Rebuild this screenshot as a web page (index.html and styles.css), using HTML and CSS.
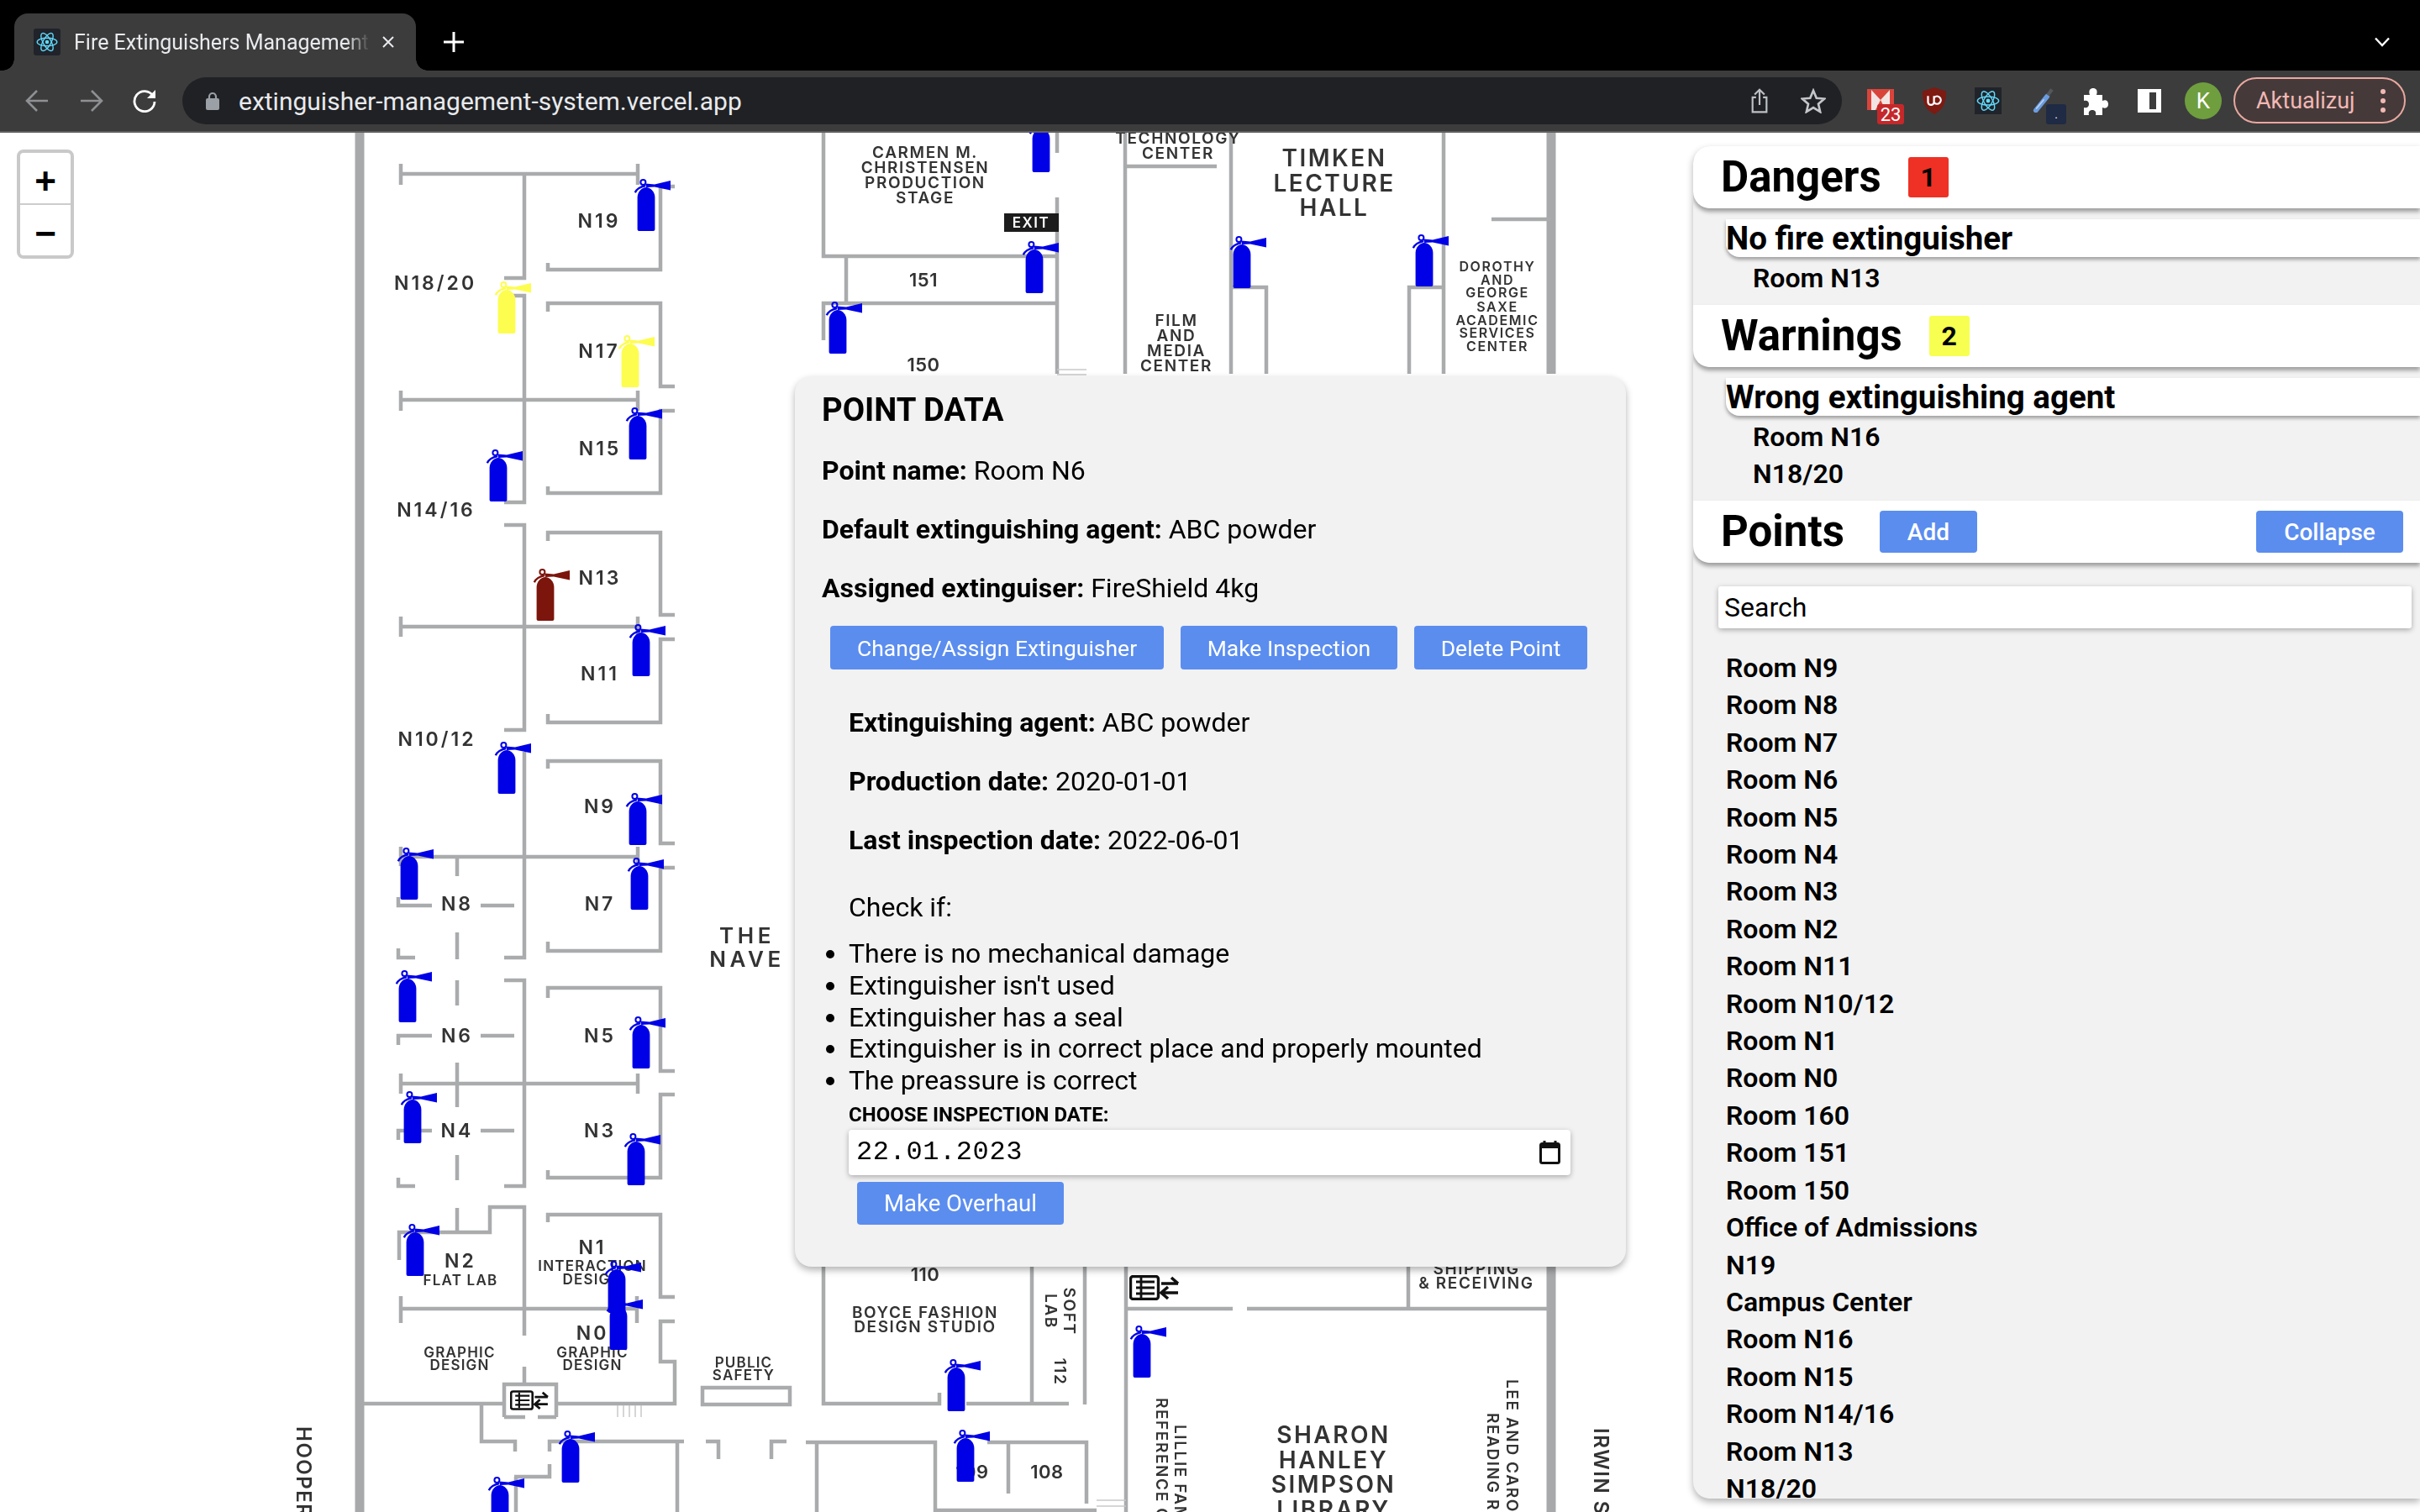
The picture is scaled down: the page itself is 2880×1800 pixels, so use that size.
FILE: index.html
```html
<!DOCTYPE html>
<html lang="en">
<head>
<meta charset="utf-8">
<title>Fire Extinguishers Management</title>
<link rel="stylesheet" href="styles.css">
</head>
<body>
<svg class="defs" width="0" height="0" aria-hidden="true">
  <defs>
    <symbol id="ext" viewBox="0 0 43 62" overflow="visible">
      <path d="M3.6 22C3.6 15 9 10 14 10C19 10 24.4 15 24.4 22V60C24.4 61.2 23.6 62 22.4 62H5.6C4.4 62 3.6 61.2 3.6 60Z"/>
      <circle cx="10.4" cy="3.9" r="3" fill="none" stroke="currentColor" stroke-width="2"/>
      <path d="M.8 16.2C3 11.4 7.5 9.4 13 8.2" fill="none" stroke="currentColor" stroke-width="2.4"/>
      <path d="M13 5.5L24 6.6L43 2V13.6L24 9.4L14 10Z"/>
    </symbol>
    <symbol id="atom" viewBox="0 0 32 32">
      <g fill="none" stroke="#61dafb" stroke-width="1.5">
        <ellipse cx="16" cy="16" rx="13.5" ry="5.4"/>
        <ellipse cx="16" cy="16" rx="13.5" ry="5.4" transform="rotate(60 16 16)"/>
        <ellipse cx="16" cy="16" rx="13.5" ry="5.4" transform="rotate(120 16 16)"/>
      </g>
      <circle cx="16" cy="16" r="2.6" fill="#61dafb"/>
    </symbol>
    <symbol id="lift" viewBox="0 0 62 30">
      <rect x="1.5" y="1.5" width="33" height="27" rx="3" fill="none" stroke="#111" stroke-width="3.4"/>
      <path d="M8 8H30M8 15H30M8 22H30M14 3V27" fill="none" stroke="#111" stroke-width="2.8"/>
      <path d="M38 10H58M50 3L58 10M38 21H58M46 14L38 21L46 28" fill="none" stroke="#111" stroke-width="3.6"/>
    </symbol>
  </defs>
</svg>

<div class="browser">
  <header class="tabstrip">
    <div class="tab">
      <span class="favicon"><svg width="28" height="28"><use href="#atom"/></svg></span>
      <span class="tab-title">Fire Extinguishers Management System</span>
      <svg class="tab-close" width="16" height="16" viewBox="0 0 16 16"><path d="M2 2L14 14M14 2L2 14" stroke="#e8eaed" stroke-width="2"/></svg>
    </div>
    <svg class="new-tab" width="26" height="26" viewBox="0 0 26 26"><path d="M13 1V25M1 13H25" stroke="#fff" stroke-width="3"/></svg>
    <svg class="tab-menu" width="20" height="12" viewBox="0 0 20 12"><path d="M2 1.5L10 10L18 1.5" fill="none" stroke="#fff" stroke-width="2.4"/></svg>
  </header>

  <nav class="toolbar">
    <svg class="nav-icon nav-back" width="28" height="28" viewBox="0 0 28 28"><path d="M27 14H3M14 2L2 14L14 26" fill="none" stroke="#8e9093" stroke-width="2.6"/></svg>
    <svg class="nav-icon nav-forward" width="28" height="28" viewBox="0 0 28 28"><path d="M1 14H25M14 2L26 14L14 26" fill="none" stroke="#8e9093" stroke-width="2.6"/></svg>
    <svg class="nav-icon nav-reload" width="28" height="28" viewBox="0 0 28 28"><path d="M24 8A12 12 0 1 0 26 15" fill="none" stroke="#fff" stroke-width="2.8"/><path d="M27 1V11H17Z" fill="#fff"/></svg>
    <div class="omnibox">
      <svg class="lock" width="16" height="22" viewBox="0 0 16 22"><path d="M4 9V6A4 4 0 0 1 12 6V9" fill="none" stroke="#9aa0a6" stroke-width="2.2"/><rect y="8" width="16" height="14" rx="2" fill="#9aa0a6"/></svg>
      <span class="url">extinguisher-management-system.vercel.app</span>
      <svg class="omni-share" width="22" height="30" viewBox="0 0 24 36"><path d="M7 13H2V34H22V13H17M12 24V2M5 9L12 2L19 9" fill="none" stroke="#bdc1c6" stroke-width="2.6"/></svg>
      <svg class="omni-star" width="30" height="30" viewBox="0 0 32 32"><path d="M16 3L20 12.5L30 13.4L22.4 20L24.7 30L16 24.7L7.3 30L9.6 20L2 13.4L12 12.5Z" fill="none" stroke="#c4c7ca" stroke-width="2.8"/></svg>
    </div>
    <div class="ext-row">
      <span class="ext ext-gmail">
        <svg width="32" height="25" viewBox="0 0 32 25"><rect width="32" height="25" fill="#d9443a"/><path d="M5 1L16 13L27 1V25H5Z" fill="#f2e4e2"/><path d="M16 13L10 25H22Z" fill="#d9443a"/></svg>
        <span class="ext-badge badge-red">23</span>
      </span>
      <span class="ext ext-ublock">
        <svg width="30" height="32" viewBox="0 0 30 34"><path d="M15 0L30 5C30 20 26 28 15 34C4 28 0 20 0 5Z" fill="#7d1a12"/><path d="M7 11V18.500A3.800 3.800 0 0 0 14.600 18.500V11M15 12.700A4.800 4.800 0 1 1 15 19.500" fill="none" stroke="#fff" stroke-width="2.400"/></svg>
      </span>
      <span class="ext ext-react"><svg width="30" height="30"><use href="#atom"/></svg></span>
      <span class="ext ext-pipette">
        <svg width="30" height="30" viewBox="0 0 30 36"><path d="M4 33L20 13" stroke="#6b9ce0" stroke-width="7" stroke-linecap="round"/><path d="M5 30L15 18" stroke="#b9d2f2" stroke-width="2" stroke-linecap="round"/><path d="M21 11L27 3" stroke="#54585c" stroke-width="5"/></svg>
        <span class="ext-badge badge-navy">.</span>
      </span>
      <svg class="ext ext-puzzle" width="30" height="32" viewBox="0 0 30 32"><path d="M1 8H8C6 2 9 0 12 0C15 0 18 2 16 8H23V15C28 13 30 16 30 19C30 22 28 25 23 23V32H15C16 28 14 26 11 26C8 26 6 28 7 32H1V23C5 24 7 22 7 19C7 16 5 14 1 15Z" fill="#fff"/></svg>
      <span class="ext ext-panel"></span>
      <span class="avatar">K</span>
      <span class="update">
        <span class="update-label">Aktualizuj</span>
        <span class="kebab"><i></i><i></i><i></i></span>
      </span>
    </div>
  </nav>

  <main class="page">
    <section class="map">
      <svg class="plan" width="2016" height="1642" viewBox="0 158 2016 1642">
        <g class="plan-art">
          <path class="wall-thick" d="M428 158V1800M1846 158V445M1846 1508V1800"/>
          <path class="wall" d="M477 195V220M477 207H759M759 195V220M624 207V331H600M600 352H624V598H600M652 313V321H786V222H803M652 371V361H786V460H803M477 465V489M477 476H759M759 465V489M803 489H786V587H652V579M600 625H624V869H600M652 644V634H786V732H803M477 734V758M477 746H759M759 734V758M803 761H786V860H652V850M624 895V1140H600M652 915V906H786V1004H803M477 1008V1031M477 1020H759M759 1008V1031M544 1020V1043M474 1068V1078H514M572 1078H612M544 1110V1142M474 1129V1140H494M803 1033H786V1132H652V1121M600 1167H624V1412H600M652 1188V1176H786V1275H803M544 1167V1197M474 1244V1233H514M572 1233H612M544 1265V1318M477 1278V1302M477 1290H759M759 1278V1302M803 1303H786V1402H652V1393M474 1357V1346H514M572 1346H612M544 1375V1405M474 1402V1412H494M475 1500V1467H583V1437H624V1590M544 1438V1467M652 1455V1446H786V1544H803M477 1543V1575M477 1558H760M758 1543V1575M803 1573H786V1621H803V1671H663M433 1671H600M600 1687V1648H662V1687M600 1687H625M640 1687H662M624 1627V1648M573 1671V1716H613V1728M654 1728V1716H814M806 1716V1800M654 1743V1758H612M614 1758V1800M840 1716H855V1737M936 1716H918V1737M959 1717H1113V1800M972 1717V1800"/>
          <path class="wall" d="M980 158V305H1258M1258 158V182M1258 235V445M1007 305V361M980 405V361H1258M1339 158V445M1339 198H1448M1465 158V445M1465 342H1507V445M1677 445V342H1718M1718 158V445M1775 261H1846M980 1508V1671H1118V1658M1150 1671H1272M1228 1508V1671M1291 1508V1672M1340 1508V1800M1340 1558H1467M1484 1558H1843M1676 1508V1558M1175 1717H1293V1790M1200 1717V1778M1113 1798H1305"/>
          <rect class="wall" x="836" y="1652" width="104" height="20"/>
          <path class="wall-faint" d="M1258 440H1293M1258 446H1293M1305 1786H1340M1305 1793H1340M735 1673V1687M742 1673V1687M749 1673V1687M756 1673V1687M763 1673V1687"/>
          <use href="#lift" x="607" y="1655" width="48" height="24"/>
          <use href="#lift" x="1344" y="1518" width="62" height="30"/>
          <rect class="exit-box" x="1195" y="254" width="65" height="22"/>
          <text class="exit-text" x="1227" y="265">EXIT</text>

          <text class="lb lb-room" x="713" y="263">N19</text>
          <text class="lb lb-room" x="518" y="337">N18/20</text>
          <text class="lb lb-room" x="713" y="418">N17</text>
          <text class="lb lb-room" x="714" y="534">N15</text>
          <text class="lb lb-room" x="519" y="607">N14/16</text>
          <text class="lb lb-room" x="714" y="688">N13</text>
          <text class="lb lb-room" x="714" y="802">N11</text>
          <text class="lb lb-room" x="520" y="880">N10/12</text>
          <text class="lb lb-room" x="714" y="960">N9</text>
          <text class="lb lb-room" x="544" y="1076">N8</text>
          <text class="lb lb-room" x="714" y="1076">N7</text>
          <text class="lb lb-room" x="544" y="1233">N6</text>
          <text class="lb lb-room" x="714" y="1233">N5</text>
          <text class="lb lb-room" x="544" y="1346">N4</text>
          <text class="lb lb-room" x="714" y="1346">N3</text>
          <text class="lb lb-room" x="548" y="1501">N2</text>
          <text class="lb lb-small" x="548" y="1524">FLAT LAB</text>
          <text class="lb lb-room" x="705" y="1485">N1</text>
          <text class="lb lb-small" x="705" y="1507">INTERACTION</text>
          <text class="lb lb-small" x="705" y="1523">DESIGN</text>
          <text class="lb lb-room" x="705" y="1587">N0</text>
          <text class="lb lb-small" x="547" y="1610">GRAPHIC</text>
          <text class="lb lb-small" x="547" y="1625">DESIGN</text>
          <text class="lb lb-small" x="705" y="1610">GRAPHIC</text>
          <text class="lb lb-small" x="705" y="1625">DESIGN</text>
          <text class="lb lb-small" x="885" y="1622">PUBLIC</text>
          <text class="lb lb-small" x="885" y="1637">SAFETY</text>
          <text class="lb lb-nave" x="889" y="1113">THE</text>
          <text class="lb lb-nave" x="889" y="1141">NAVE</text>
          <text class="lb lb-mid" x="1101" y="181">CARMEN M.</text>
          <text class="lb lb-mid" x="1101" y="199">CHRISTENSEN</text>
          <text class="lb lb-mid" x="1101" y="217">PRODUCTION</text>
          <text class="lb lb-mid" x="1101" y="235">STAGE</text>
          <text class="lb lb-mid" x="1402" y="164">TECHNOLOGY</text>
          <text class="lb lb-mid" x="1402" y="182">CENTER</text>
          <text class="lb lb-big" x="1588" y="188">TIMKEN</text>
          <text class="lb lb-big" x="1588" y="218">LECTURE</text>
          <text class="lb lb-big" x="1588" y="247">HALL</text>
          <text class="lb lb-num" x="1099" y="333">151</text>
          <text class="lb lb-num" x="1099" y="434">150</text>
          <text class="lb lb-mid" x="1400" y="381">FILM</text>
          <text class="lb lb-mid" x="1400" y="399">AND</text>
          <text class="lb lb-mid" x="1400" y="417">MEDIA</text>
          <text class="lb lb-mid" x="1400" y="435">CENTER</text>
          <text class="lb lb-tiny" x="1782" y="317">DOROTHY</text>
          <text class="lb lb-tiny" x="1782" y="333">AND</text>
          <text class="lb lb-tiny" x="1782" y="348">GEORGE</text>
          <text class="lb lb-tiny" x="1782" y="365">SAXE</text>
          <text class="lb lb-tiny" x="1782" y="381">ACADEMIC</text>
          <text class="lb lb-tiny" x="1782" y="396">SERVICES</text>
          <text class="lb lb-tiny" x="1782" y="412">CENTER</text>
          <text class="lb lb-num" x="1101" y="1517">110</text>
          <text class="lb lb-mid" x="1101" y="1562">BOYCE FASHION</text>
          <text class="lb lb-mid" x="1101" y="1579">DESIGN STUDIO</text>
          <text class="lb lb-mid" x="1757" y="1510">SHIPPING</text>
          <text class="lb lb-mid" x="1757" y="1527">&amp; RECEIVING</text>
          <text class="lb lb-num" x="1246" y="1752">108</text>
          <text class="lb lb-num" x="1157" y="1752">109</text>
          <text class="lb lb-big" x="1587" y="1708">SHARON</text>
          <text class="lb lb-big" x="1587" y="1738">HANLEY</text>
          <text class="lb lb-big" x="1587" y="1767">SIMPSON</text>
          <text class="lb lb-big" x="1587" y="1797">LIBRARY</text>
          <text class="lb lb-mid" transform="translate(1272 1561) rotate(90)">SOFT</text>
          <text class="lb lb-mid" transform="translate(1250 1561) rotate(90)">LAB</text>
          <text class="lb lb-mid" transform="translate(1261 1633) rotate(90)">112</text>
          <text class="lb lb-mid lb-start" transform="translate(1404 1696) rotate(90)">LILLIE FAMILY</text>
          <text class="lb lb-mid lb-start" transform="translate(1382 1664) rotate(90)">REFERENCE CENTER</text>
          <text class="lb lb-mid lb-start" transform="translate(1799 1642) rotate(90)">LEE AND CAROLE</text>
          <text class="lb lb-mid lb-start" transform="translate(1777 1682) rotate(90)">READING ROOM</text>
          <text class="lb lb-street lb-start" transform="translate(362 1698) rotate(90)">HOOPER STREET</text>
          <text class="lb lb-street lb-start" transform="translate(1906 1700) rotate(90)">IRWIN STREET</text>
        </g>

        <g class="ext-blue">
          <use href="#ext" x="755" y="213" width="43" height="62"/>
          <use href="#ext" x="745" y="485" width="43" height="62"/>
          <use href="#ext" x="579" y="535" width="43" height="62"/>
          <use href="#ext" x="749" y="743" width="43" height="62"/>
          <use href="#ext" x="589" y="883" width="43" height="62"/>
          <use href="#ext" x="745" y="944" width="43" height="62"/>
          <use href="#ext" x="473" y="1009" width="43" height="62"/>
          <use href="#ext" x="747" y="1021" width="43" height="62"/>
          <use href="#ext" x="471" y="1155" width="43" height="62"/>
          <use href="#ext" x="749" y="1210" width="43" height="62"/>
          <use href="#ext" x="477" y="1299" width="43" height="62"/>
          <use href="#ext" x="743" y="1349" width="43" height="62"/>
          <use href="#ext" x="480" y="1457" width="43" height="62"/>
          <use href="#ext" x="722" y="1545" width="43" height="62"/>
          <use href="#ext" x="720" y="1501" width="43" height="62"/>
          <use href="#ext" x="665" y="1703" width="43" height="62"/>
          <use href="#ext" x="581" y="1758" width="43" height="62"/>
          <use href="#ext" x="1225" y="143" width="43" height="62"/>
          <use href="#ext" x="1217" y="287" width="43" height="62"/>
          <use href="#ext" x="983" y="359" width="43" height="62"/>
          <use href="#ext" x="1464" y="281" width="43" height="62"/>
          <use href="#ext" x="1681" y="279" width="43" height="62"/>
          <use href="#ext" x="1124" y="1618" width="43" height="62"/>
          <use href="#ext" x="1345" y="1578" width="43" height="62"/>
          <use href="#ext" x="1135" y="1702" width="43" height="62"/>
        </g>
        <g class="ext-yellow">
          <use href="#ext" x="589" y="335" width="43" height="62"/>
          <use href="#ext" x="736" y="399" width="43" height="62"/>
        </g>
        <g class="ext-red">
          <use href="#ext" x="635" y="677" width="43" height="62"/>
        </g>
      </svg>

      <div class="zoom-control">
        <span class="zoom-btn">+</span>
        <span class="zoom-btn">−</span>
      </div>

      <article class="point-panel">
        <h2 class="panel-title">POINT DATA</h2>
        <p class="field"><b>Point name:</b> Room N6</p>
        <p class="field"><b>Default extinguishing agent:</b> ABC powder</p>
        <p class="field"><b>Assigned extinguiser:</b> FireShield 4kg</p>
        <div class="panel-actions">
          <button class="btn btn-action">Change/Assign Extinguisher</button>
          <button class="btn btn-action">Make Inspection</button>
          <button class="btn btn-action">Delete Point</button>
        </div>
        <div class="panel-inner">
          <p class="field"><b>Extinguishing agent:</b> ABC powder</p>
          <p class="field"><b>Production date:</b> 2020-01-01</p>
          <p class="field"><b>Last inspection date:</b> 2022-06-01</p>
          <p class="check-title">Check if:</p>
          <ul class="check-list">
            <li>There is no mechanical damage</li>
            <li>Extinguisher isn't used</li>
            <li>Extinguisher has a seal</li>
            <li>Extinguisher is in correct place and properly mounted</li>
            <li>The preassure is correct</li>
          </ul>
          <div class="date-label">CHOOSE INSPECTION DATE:</div>
          <div class="date-input">
            <span class="date-value">22.01.2023</span>
            <svg width="25" height="28" viewBox="0 0 25 28"><path d="M6 0V4M19 0V4" stroke="#111" stroke-width="3"/><rect x="1.5" y="3.5" width="22" height="23" rx="2" fill="none" stroke="#111" stroke-width="3"/><rect x="1" y="3" width="23" height="6" fill="#111"/></svg>
          </div>
          <button class="btn btn-overhaul">Make Overhaul</button>
        </div>
      </article>
    </section>

    <aside class="sidebar">
      <div class="sec-head sec-first"><h1 class="sec-title">Dangers</h1><span class="count count-red">1</span></div>
      <h3 class="sub-head">No fire extinguisher</h3>
      <ul class="alert-list"><li>Room N13</li></ul>
      <div class="sec-head"><h1 class="sec-title">Warnings</h1><span class="count count-yellow">2</span></div>
      <h3 class="sub-head">Wrong extinguishing agent</h3>
      <ul class="alert-list"><li>Room N16</li><li>N18/20</li></ul>
      <div class="sec-head">
        <h1 class="sec-title">Points</h1>
        <button class="btn btn-side">Add</button>
        <button class="btn btn-side btn-collapse">Collapse</button>
      </div>
      <div class="search">Search</div>
      <ul class="point-list">
        <li>Room N9</li><li>Room N8</li><li>Room N7</li><li>Room N6</li><li>Room N5</li><li>Room N4</li>
        <li>Room N3</li><li>Room N2</li><li>Room N11</li><li>Room N10/12</li><li>Room N1</li><li>Room N0</li>
        <li>Room 160</li><li>Room 151</li><li>Room 150</li><li>Office of Admissions</li><li>N19</li>
        <li>Campus Center</li><li>Room N16</li><li>Room N15</li><li>Room N14/16</li><li>Room N13</li><li>N18/20</li>
      </ul>
    </aside>
  </main>
</div>
</body>
</html>
```
FILE: styles.css
```css
* { box-sizing: border-box; }
html, body { margin: 0; padding: 0; }
body { width: 2880px; height: 1800px; overflow: hidden; background: #fff; font-family: Roboto, "Liberation Sans", sans-serif; color: #000; }
.defs { position: absolute; }
.browser { display: flex; flex-direction: column; width: 2880px; height: 1800px; overflow: hidden; }

/* tab strip */
.tabstrip { display: flex; align-items: flex-end; height: 84px; background: #000; flex: none; padding-left: 17px; position: relative; }
.tab { display: flex; align-items: center; width: 478px; height: 68px; background: #3c3c3c; border-radius: 16px 16px 0 0; padding: 0 24px 0 23px; position: relative; }
.tab::before, .tab::after { content: ""; position: absolute; bottom: 0; width: 14px; height: 14px; }
.tab::before { left: -14px; background: radial-gradient(circle at 0 0, #000 13.5px, #3c3c3c 14px); }
.tab::after { right: -14px; background: radial-gradient(circle at 100% 0, #000 13.5px, #3c3c3c 14px); }
.favicon { display: flex; align-items: center; justify-content: center; width: 32px; height: 32px; background: #20232a; border-radius: 3px; flex: none; }
.tab-title { margin-left: 16px; width: 352px; font-size: 25px; color: #e8eaed; white-space: nowrap; overflow: hidden; -webkit-mask-image: linear-gradient(90deg, #000 92%, transparent); mask-image: linear-gradient(90deg, #000 92%, transparent); }
.tab-close { margin-left: 14px; flex: none; }
.new-tab { margin: 0 0 21px 32px; }
.tab-menu { margin: 0 35px 28px auto; }

/* toolbar */
.toolbar { display: flex; align-items: center; height: 74px; flex: none; background: #3c3c3c; border-bottom: 2px solid #5e5e5e; }
.nav-icon { flex: none; }
.nav-back { margin-left: 30px; }
.nav-forward { margin-left: 37px; }
.nav-reload { margin-left: 35px; }
.omnibox { display: flex; align-items: center; margin-left: 31px; width: 1975px; height: 56px; background: #202124; border-radius: 28px; padding-left: 28px; }
.lock { flex: none; }
.url { margin-left: 23px; font-size: 30px; color: #e8eaed; white-space: nowrap; }
.omni-share { margin-left: auto; }
.omni-star { margin: 0 19px 0 38px; }
.ext-row { display: flex; align-items: center; flex: 1; position: relative; height: 72px; }
.ext { position: absolute; display: block; }
.ext-gmail { left: 30px; top: 22px; width: 44px; height: 42px; }
.ext-ublock { left: 95px; top: 20px; width: 30px; height: 32px; }
.ext-react { left: 158px; top: 20px; width: 32px; height: 32px; background: #20232a; display: flex; align-items: center; justify-content: center; }
.ext-pipette { left: 225px; top: 20px; width: 46px; height: 46px; }
.ext-puzzle { left: 287px; top: 21px; }
.ext-panel { left: 352px; top: 22px; width: 28px; height: 28px; border: solid #fff; border-width: 4px 6px 4px 14px; background: #3c3c3c; }
.ext-badge { position: absolute; display: flex; align-items: center; justify-content: center; width: 32px; height: 24px; border-radius: 3px; font-size: 22px; color: #fff; }
.badge-red { left: 12px; top: 18px; background: #c5282a; }
.badge-navy { left: 18px; top: 20px; width: 24px; background: #1f2a44; font-size: 14px; }
.avatar { position: absolute; left: 408px; top: 14px; width: 44px; height: 44px; border-radius: 50%; background: #6f9e3f; color: #fff; display: flex; align-items: center; justify-content: center; font-size: 26px; }
.update { position: absolute; left: 466px; top: 8px; width: 205px; height: 55px; border: 2px solid #e8a8a0; border-radius: 28px; background: #453a39; display: flex; align-items: center; padding-left: 25px; }
.update-label { font-size: 27px; color: #f2b8b5; }
.kebab { display: flex; flex-direction: column; gap: 5px; margin-left: 30px; }
.kebab i { display: block; width: 6px; height: 6px; border-radius: 50%; background: #f2b8b5; }

/* page */
.page { flex: 1; display: flex; position: relative; min-height: 0; }
.map { flex: none; width: 2015px; height: 1642px; position: relative; overflow: hidden; }
.plan { display: block; }
.plan-art { filter: blur(.5px); }
.wall { fill: none; stroke: #a9abad; stroke-width: 4.5; }
.wall-thick { fill: none; stroke: #a7a9ab; stroke-width: 11; }
.wall-faint { fill: none; stroke: #c9c9c9; stroke-width: 1.5; }
.exit-box { fill: #1c1c1c; }
.exit-text { font: 600 17px Inter, sans-serif; fill: #fff; text-anchor: middle; dominant-baseline: central; letter-spacing: 1.5px; }
.lb { font-family: Inter, Lato, sans-serif; font-weight: 600; fill: #333; text-anchor: middle; dominant-baseline: central; }
.lb-start { text-anchor: start; }
.lb-room { font-size: 23px; letter-spacing: 3px; }
.lb-small { font-size: 17px; letter-spacing: 1.2px; }
.lb-nave { font-size: 26px; letter-spacing: 4.5px; }
.lb-mid { font-size: 19px; letter-spacing: 1.6px; }
.lb-big { font-size: 28px; letter-spacing: 2.5px; }
.lb-num { font-size: 22px; letter-spacing: .5px; }
.lb-tiny { font-size: 16px; letter-spacing: 1.6px; }
.lb-street { font-size: 24px; letter-spacing: 1.5px; }
.ext-blue { fill: #0000e6; color: #0000e6; }
.ext-yellow { fill: #fdfd50; color: #fdfd50; }
.ext-red { fill: #7c150c; color: #7c150c; }

/* map zoom */
.zoom-control { position: absolute; left: 20px; top: 20px; width: 68px; height: 130px; border: 4px solid #c9c9c9; border-radius: 8px; background: #fff; display: flex; flex-direction: column; }
.zoom-btn { flex: 1; display: flex; align-items: center; justify-content: center; padding-top: 7px; font: 700 44px "Liberation Sans", sans-serif; color: #000; }
.zoom-btn + .zoom-btn { border-top: 2px solid #ccc; }

/* point panel */
.point-panel { position: absolute; left: 946px; top: 290px; width: 989px; height: 1060px; background: #f2f2f2; border-radius: 20px; box-shadow: 0 4px 8px rgba(0,0,0,.3); padding: 18px 32px; font-size: 32px; }
.panel-title { margin: 0 0 32px; font-size: 38.3px; font-weight: 700; line-height: 43px; }
.field { margin: 0 0 32px; line-height: 38px; font-size: 32px; }
.field b { font-weight: 700; }
.panel-actions { display: flex; gap: 19.5px; margin: -6px 0 0 10px; }
.btn { flex: none; border: 0; background: #5b8def; color: #fff; height: 52px; border-radius: 4px; padding: 0 32px; white-space: nowrap; font: 400 27.5px Roboto, sans-serif; }
.btn-action { font-size: 26.5px; }
.panel-inner { padding: 44px 0 0 32px; }
.panel-inner .field { margin-bottom: 32px; }
.check-title { margin: 42px 0 18px; line-height: 38px; }
.check-list { margin: 0; padding: 0; list-style: disc; line-height: 37.8px; }
.date-label { font-size: 24px; font-weight: 700; line-height: 30px; margin-top: 6px; }
.date-input { display: flex; align-items: center; justify-content: space-between; width: 859px; height: 54px; margin-top: 3px; background: #fff; border-radius: 4px; box-shadow: 0 2px 6px rgba(0,0,0,.3); padding: 0 12px 0 9px; }
.date-value { font: 32px "Liberation Mono", monospace; letter-spacing: .6px; }
.btn-overhaul { display: block; margin: 8px 0 0 10px; height: 51px; }

/* sidebar */
.sidebar { flex: none; width: 865px; height: 1610px; margin-top: 16px; background: #f2f2f2; border-radius: 20px 0 0 20px; box-shadow: 0 4px 8px rgba(0,0,0,.3); overflow: hidden; display: flex; flex-direction: column; }
.sec-head { display: flex; align-items: center; flex: none; height: 74px; background: #fff; padding-left: 33px; border-radius: 0 0 0 20px; box-shadow: 0 4px 5px rgba(0,0,0,.35); position: relative; }
.sec-first { border-radius: 20px 0 0 20px; }
.sec-title { margin: 0; font-size: 51px; font-weight: 700; line-height: 60px; }
.count { display: flex; align-items: center; justify-content: center; width: 48px; height: 48px; margin-left: 32px; border-radius: 3px; font-size: 32px; font-weight: 700; }
.count-red { background: #ee3124; }
.count-yellow { background: #f7ff50; }
.sub-head { margin: 13px 0 0 39px; height: 45px; background: #fff; border-radius: 0 0 0 16px; box-shadow: 0 3px 4px rgba(0,0,0,.35); font-size: 38.5px; font-weight: 700; line-height: 45px; flex: none; position: relative; }
.alert-list { list-style: none; margin: 3px 0 0; padding: 0 0 10px 71px; font-size: 32px; font-weight: 600; line-height: 44px; flex: none; }
.btn-side { height: 50px; padding: 0; width: 116px; margin-left: 42px; font-weight: 500; font-size: 28px; }
.btn-collapse { width: 175px; margin-left: auto; margin-right: 20px; }
.search { flex: none; margin: 28px 10px 0 30px; height: 50px; background: #fff; border-radius: 3px; box-shadow: 0 2px 6px rgba(0,0,0,.3); font-size: 32px; line-height: 50px; padding-left: 7px; }
.point-list { list-style: none; margin: 25px 0 0; padding: 0 0 0 39px; font-size: 32px; font-weight: 600; line-height: 44.4px; overflow: hidden; flex: 1; min-height: 0; }
```
